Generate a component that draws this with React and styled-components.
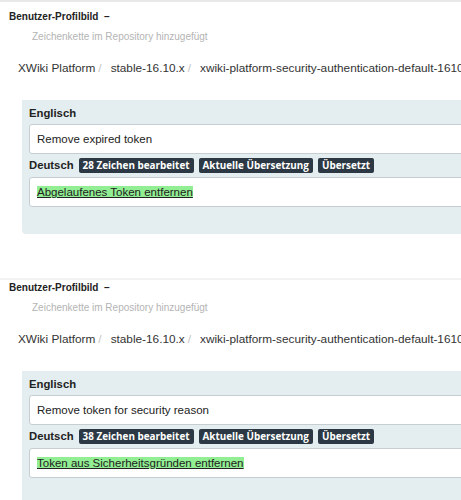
import React from "react";
import styled, { createGlobalStyle } from "styled-components";

const Global = createGlobalStyle`
  html, body { margin: 0; padding: 0; background: #fff; }
  body { overflow: hidden; width: 461px; height: 500px; font-family: "Liberation Sans", Arial, sans-serif; color: #333; }
`;

const Page = styled.div`
  width: 700px;
  display: flex;
  flex-direction: column;
`;

const Entry = styled.section`
  border-top: 2px solid ${(p) => (p.$first ? "#e8e8e8" : "#f2f2f2")};
  margin-top: ${(p) => (p.$first ? "0" : "44px")};
  display: flex;
  flex-direction: column;
`;

const Title = styled.div`
  font-size: 10px;
  font-weight: 700;
  color: #222;
  padding: ${(p) => (p.$first ? "8px" : "1px")} 0 0 9px;
  line-height: 14px;
`;

const Subtitle = styled.div`
  font-size: 10px;
  color: #b4b4b4;
  padding: 6px 0 0 32px;
  line-height: 14px;
`;

const Crumbs = styled.div`
  display: flex;
  align-items: center;
  white-space: nowrap;
  font-size: 11.8px;
  color: #333;
  padding: 16px 0 0 18px;
  line-height: 16px;
`;

const Sep = styled.span`
  color: #c4c4c4;
  margin: 0 9px 0 3px;
`;

const Panel = styled.div`
  margin: 24px 0 0 22px;
  background: #e4eef0;
  border-radius: 0 0 0 4px;
  padding: 5px 0 27px 7px;
  display: flex;
  flex-direction: column;
`;

const Label = styled.div`
  font-size: 11.3px;
  font-weight: 700;
  color: #222;
  line-height: 16px;
  display: flex;
  align-items: center;
  gap: 5px;
`;

const LabelRow = styled(Label)`
  margin-top: 4px;
  line-height: 15px;
`;

const TextBox = styled.div`
  margin-top: ${(p) => (p.$second ? "4px" : "3px")};
  background: #fff;
  border: 1px solid #c6ced2;
  border-radius: 3px;
  height: 28px;
  display: flex;
  align-items: center;
  padding-left: 7px;
  font-size: 11.5px;
  color: #222;
`;

const Badge = styled.span`
  background: #2c3843;
  color: #fff;
  font-family: "Open Sans", sans-serif;
  font-weight: 700;
  font-size: 9.9px;
  line-height: 15px;
  height: 15px;
  padding: 0 4px;
  border-radius: 2px;
`;

const Highlight = styled.span`
  background: #92ee92;
  text-decoration: underline;
  text-underline-offset: 1px;
  color: #222;
`;

const entries = [
  {
    en: "Remove expired token",
    de: "Abgelaufenes Token entfernen",
    chars: 28,
  },
  {
    en: "Remove token for security reason",
    de: "Token aus Sicherheitsgründen entfernen",
    chars: 38,
  },
];

const crumbs = [
  "XWiki Platform",
  "stable-16.10.x",
  "xwiki-platform-security-authentication-default-1610x",
];

export default function App() {
  return (
    <>
      <Global />
      <Page>
        {entries.map((e, i) => (
          <Entry key={i} $first={i === 0}>
            <Title $first={i === 0}>Benutzer-Profilbild &nbsp;–</Title>
            <Subtitle>Zeichenkette im Repository hinzugefügt</Subtitle>
            <Crumbs>
              {crumbs.map((c, j) => (
                <React.Fragment key={j}>
                  <span>{c}</span>
                  {j < crumbs.length - 1 && <Sep>/</Sep>}
                </React.Fragment>
              ))}
            </Crumbs>
            <Panel>
              <Label>Englisch</Label>
              <TextBox>{e.en}</TextBox>
              <LabelRow>
                Deutsch
                <Badge>{e.chars} Zeichen bearbeitet</Badge>
                <Badge>Aktuelle Übersetzung</Badge>
                <Badge>Übersetzt</Badge>
              </LabelRow>
              <TextBox $second>
                <Highlight>{e.de}</Highlight>
              </TextBox>
            </Panel>
          </Entry>
        ))}
      </Page>
    </>
  );
}
